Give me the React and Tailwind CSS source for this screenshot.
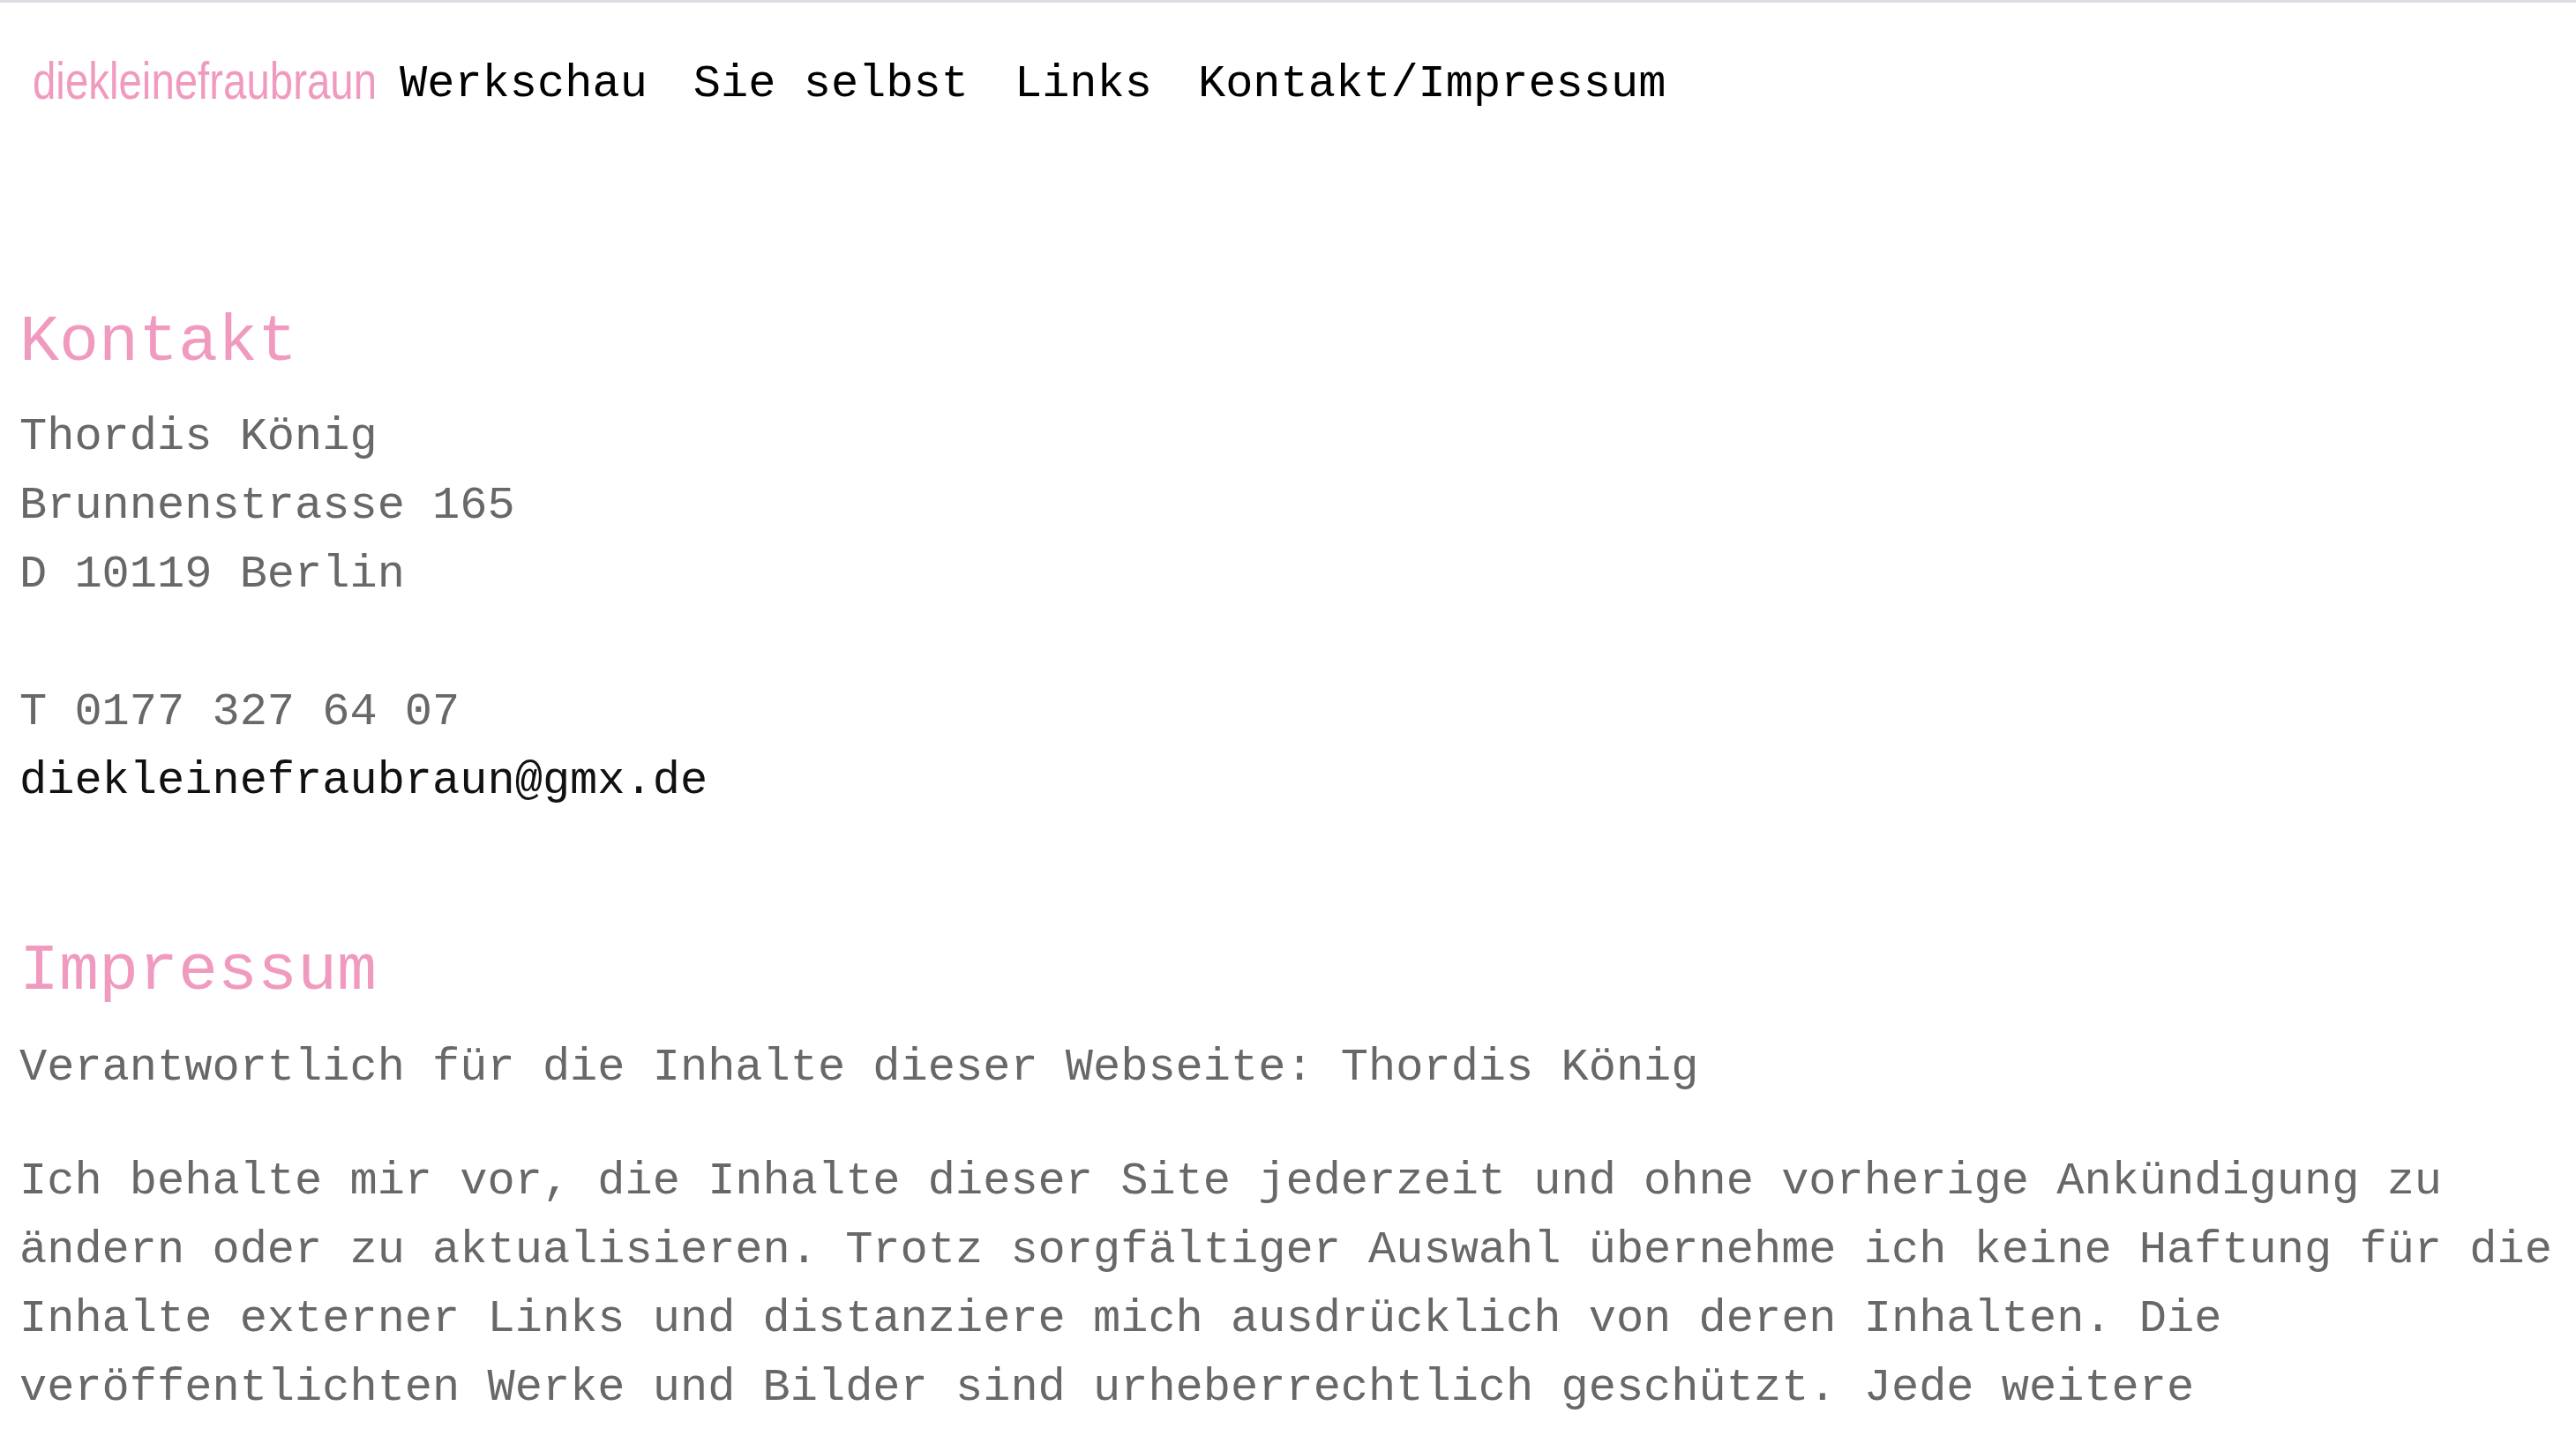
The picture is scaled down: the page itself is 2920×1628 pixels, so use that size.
const navItems = ["Werkschau", "Sie selbst", "Links", "Kontakt/Impressum"];

const mono = "font-['Liberation_Mono','Courier_New',monospace]";

export default function App() {
  return (
    <div className="min-h-screen bg-white border-t-[3px] border-[#dedde4]">
      <header className="flex items-baseline pl-[37px] pt-[47px]">
        {/* narrow face isn't installed, squeeze the regular one */}
        <a
          href="#"
          className="mr-[27px] w-[389px] shrink-0 whitespace-nowrap text-[60px] leading-[78px] text-[#f19ac0] font-['Liberation_Sans_Narrow','Arial_Narrow','Liberation_Sans',sans-serif]"
        >
          <span className="inline-block origin-left translate-y-[3px] scale-x-[0.79]">diekleinefraubraun</span>
        </a>
        <nav className={`flex gap-[52px] text-[52px] leading-[78px] text-black ${mono}`}>
          {navItems.map((item) => (
            <a key={item} href="#">
              {item}
            </a>
          ))}
        </nav>
      </header>

      <main className={`px-[22px] text-[52px] leading-[78px] text-[#686868] ${mono}`}>
        <h2 className="mt-[209px] text-[75px] leading-[90px] text-[#f19ac0]">Kontakt</h2>
        <div className="mt-[23px]">
          <p>Thordis König</p>
          <p>Brunnenstrasse 165</p>
          <p>D 10119 Berlin</p>
          <p>&nbsp;</p>
          <p>T 0177 327 64 07</p>
          <a href="#" className="block text-[#111111]">
            diekleinefraubraun@gmx.de
          </a>
        </div>

        <h2 className="mt-[132px] text-[75px] leading-[90px] text-[#f19ac0]">Impressum</h2>
        <p className="mt-[25px]">Verantwortlich für die Inhalte dieser Webseite: Thordis König</p>
        <p className="mt-[51px]">
          Ich behalte mir vor, die Inhalte dieser Site jederzeit und ohne vorherige Ankündigung zu
          ändern oder zu aktualisieren. Trotz sorgfältiger Auswahl übernehme ich keine Haftung für die
          Inhalte externer Links und distanziere mich ausdrücklich von deren Inhalten. Die
          veröffentlichten Werke und Bilder sind urheberrechtlich geschützt. Jede weitere
        </p>
      </main>
    </div>
  );
}
